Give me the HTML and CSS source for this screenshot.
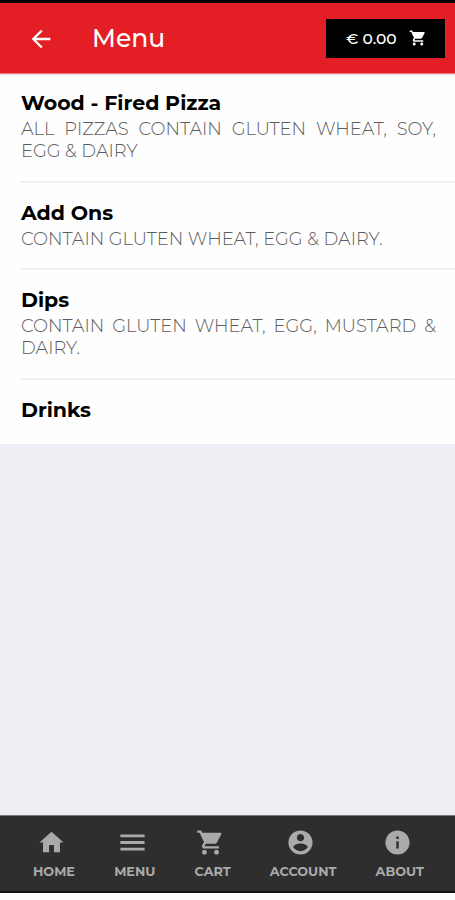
FILE: index.html
```
<!doctype html>
<html lang="en">
<head>
<meta charset="utf-8">
<title>Menu</title>
<meta name="viewport" content="width=device-width, initial-scale=1">
<link rel="stylesheet" href="styles.css">
</head>
<body>

<header class="topbar">
	<svg class="back" viewBox="0 0 24 24"><path d="M20 11H7.83l5.59-5.59L12 4l-8 8 8 8 1.41-1.41L7.83 13H20v-2z"/></svg>
	<h1>Menu</h1>
	<div class="total">
		<span>€ 0.00</span>
		<svg viewBox="0 0 24 24"><path d="M7 18c-1.1 0-1.99.9-1.99 2S5.9 22 7 22s2-.9 2-2-.9-2-2-2zM1 2v2h2l3.6 7.59-1.35 2.45c-.16.28-.25.61-.25.96 0 1.1.9 2 2 2h12v-2H7.42c-.14 0-.25-.11-.25-.25l.03-.12.9-1.63h7.45c.75 0 1.41-.41 1.75-1.03l3.58-6.49c.08-.14.12-.31.12-.48 0-.55-.45-1-1-1H5.21l-.94-2H1zm16 16c-1.1 0-1.99.9-1.99 2s.89 2 1.99 2 2-.9 2-2-.9-2-2-2z"/></svg>
	</div>
</header>

<main>
	<ul class="list">
		<li>
			<h2>Wood - Fired Pizza</h2>
			<p>ALL PIZZAS CONTAIN GLUTEN WHEAT, SOY, EGG &amp; DAIRY</p>
		</li>
		<li>
			<h2>Add Ons</h2>
			<p>CONTAIN GLUTEN WHEAT, EGG &amp; DAIRY.</p>
		</li>
		<li>
			<h2>Dips</h2>
			<p>CONTAIN GLUTEN WHEAT, EGG, MUSTARD &amp; DAIRY.</p>
		</li>
		<li>
			<h2>Drinks</h2>
		</li>
	</ul>
</main>

<nav class="tabs">
	<a class="tab">
		<svg viewBox="0 0 24 24"><path d="M10 20v-6h4v6h5v-8h3L12 3 2 12h3v8z"/></svg>
		<span>HOME</span>
	</a>
	<a class="tab">
		<svg viewBox="0 0 24 24"><path d="M2 18.7h20v-2.4H2v2.4zm0-5.5h20v-2.4H2v2.4zM2 5.3v2.4h20V5.3H2z"/></svg>
		<span>MENU</span>
	</a>
	<a class="tab">
		<svg viewBox="0 0 24 24"><path d="M7 18c-1.1 0-1.99.9-1.99 2S5.9 22 7 22s2-.9 2-2-.9-2-2-2zM1 2v2h2l3.6 7.59-1.35 2.45c-.16.28-.25.61-.25.96 0 1.1.9 2 2 2h12v-2H7.42c-.14 0-.25-.11-.25-.25l.03-.12.9-1.63h7.45c.75 0 1.41-.41 1.75-1.03l3.58-6.49c.08-.14.12-.31.12-.48 0-.55-.45-1-1-1H5.21l-.94-2H1zm16 16c-1.1 0-1.99.9-1.99 2s.89 2 1.99 2 2-.9 2-2-.9-2-2-2z"/></svg>
		<span>CART</span>
	</a>
	<a class="tab">
		<svg viewBox="0 0 24 24"><path d="M12 2C6.48 2 2 6.48 2 12s4.48 10 10 10 10-4.48 10-10S17.52 2 12 2zm0 3c1.66 0 3 1.34 3 3s-1.34 3-3 3-3-1.34-3-3 1.34-3 3-3zm0 14.2c-2.5 0-4.71-1.28-6-3.22.03-1.99 4-3.08 6-3.08 1.99 0 5.97 1.09 6 3.08-1.29 1.94-3.5 3.22-6 3.22z"/></svg>
		<span>ACCOUNT</span>
	</a>
	<a class="tab">
		<svg viewBox="0 0 24 24"><path d="M12 2C6.48 2 2 6.48 2 12s4.48 10 10 10 10-4.48 10-10S17.52 2 12 2zm1 15h-2v-6h2v6zm0-8h-2V7h2v2z"/></svg>
		<span>ABOUT</span>
	</a>
</nav>

</body>
</html>
```
FILE: styles.css
```
* {
	box-sizing: border-box;
}
body {
	margin: 0;
	height: 900px;
	display: flex;
	flex-direction: column;
	padding-bottom: 7px;
	background: #fcfcfc;
	font-family: Montserrat, Inter, sans-serif;
	overflow: hidden;
}
h1, h2, p, ul {
	margin: 0;
	padding: 0;
}
svg {
	display: block;
	fill: currentColor;
}

/* top bar */
.topbar {
	height: 74px;
	flex: none;
	display: flex;
	align-items: center;
	padding: 1px 10px 0 27px;
	border-top: 3px solid #000;
	border-bottom: 1px solid #e8777b;
	background: #e31e25;
	color: #fff;
}
.back {
	width: 28px;
	height: 28px;
}
.topbar h1 {
	margin: -1px 0 0 37px;
	font-size: 25px;
	font-weight: 500;
	line-height: 32px;
}
.total {
	width: 119px;
	height: 39px;
	margin-left: auto;
	padding: 0 18px 1px 20px;
	display: flex;
	align-items: center;
	justify-content: space-between;
	background: #000;
	font-size: 15.5px;
	font-weight: 500;
}
.total svg {
	width: 18px;
	height: 18px;
}

/* category list */
main {
	flex: 1;
	background: #eeedf3;
}
.list {
	list-style: none;
	padding-left: 21px;
	background: #fefefe;
	box-shadow: inset 0 3px 2px -2px #ddd;
}
.list li {
	padding: 17px 19px 19px 0;
	border-bottom: 2px solid #f0f0f0;
}
.list li:first-child {
	padding: 16px 19px 19.6px 0;
}
.list li:last-child {
	padding-bottom: 22.6px;
	border-bottom: 0;
}
.list h2 {
	font-size: 20.5px;
	font-weight: 700;
	line-height: 25px;
	color: #000;
}
.list p {
	margin-top: 3px;
	font-size: 17.85px;
	font-weight: 300;
	line-height: 21.6px;
	text-align: justify;
	color: #5c5c5c;
}

/* bottom tabs */
.tabs {
	height: 78px;
	flex: none;
	display: flex;
	gap: 39.2px;
	padding: 12px 0 0 33px;
	border-top: 1px solid #777;
	border-bottom: 2px solid #111;
	background: #2e2e2e;
	color: #aaa;
}
.tab {
	display: flex;
	flex-direction: column;
	align-items: center;
}
.tab svg {
	width: 29px;
	height: 29px;
	margin-right: 5px;
}
.tab span {
	margin-top: 6px;
	font-size: 12.8px;
	font-weight: 700;
	line-height: 18px;
}
```
